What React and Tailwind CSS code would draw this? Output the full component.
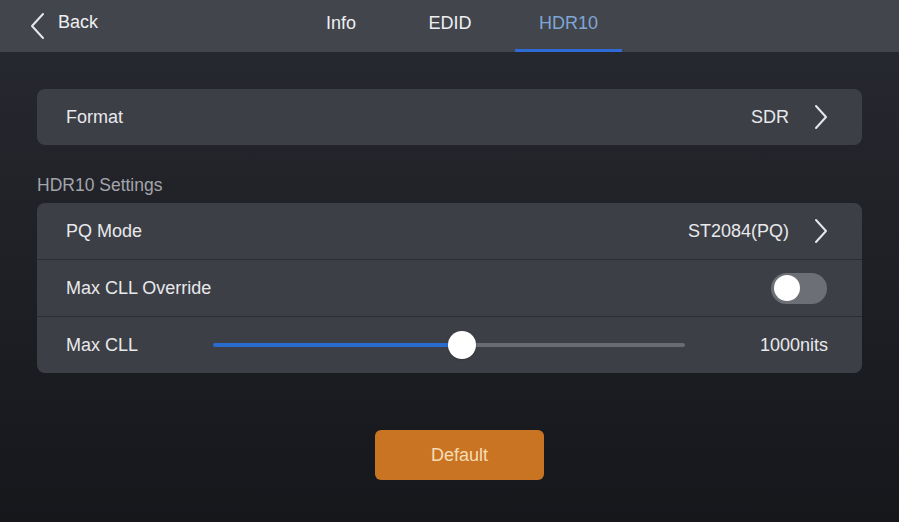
import React from "react";

function Chevron({ className = "" }) {
  return (
    <svg width="14" height="26" viewBox="0 0 14 26" className={className} fill="none">
      <path d="M2 2 L12 13 L2 24" stroke="#e6e7ea" strokeWidth="2" strokeLinecap="round" strokeLinejoin="round" />
    </svg>
  );
}

export default function App() {
  return (
    <div
      className="w-[899px] h-[522px] overflow-hidden flex flex-col bg-gradient-to-b from-[#282a31] to-[#16171b] text-[#e8e9ec]"
      style={{ fontFamily: '"Liberation Sans", Arial, sans-serif' }}
    >
      {/* Header */}
      <div className="h-[52px] bg-[#43454d] flex items-stretch relative shrink-0">
        <div className="flex items-center pl-[29px] gap-[13px]">
          <svg width="16" height="28" viewBox="0 0 16 28" fill="none">
            <path d="M14 2 L3 14 L14 26" stroke="#e6e7ea" strokeWidth="2" strokeLinecap="round" strokeLinejoin="round" />
          </svg>
          <span className="text-[18px] text-[#eeeff1] -mt-[7px]">Back</span>
        </div>
        <div className="absolute left-[287px] top-0 h-[52px] flex">
          <div className="w-[108px] flex justify-center pt-[10px] text-[18px] text-[#eeeff1]">Info</div>
          <div className="w-[110px] flex justify-center pt-[10px] text-[18px] text-[#eeeff1]">EDID</div>
          <div className="ml-[10px] w-[107px] flex flex-col items-center justify-between pt-[10px] text-[18px] text-[#7ea6d6]">
            <span>HDR10</span>
            <div className="w-full h-[3px] bg-[#2f6ad6]" />
          </div>
        </div>
      </div>

      <div className="px-[37px] pt-[37px] flex flex-col">
        {/* Format */}
        <div className="h-[56px] rounded-[8px] bg-[#3d3f46] flex items-center pl-[29px] pr-[34px]">
          <span className="text-[18px] flex-1">Format</span>
          <span className="text-[18px] mr-[25px]">SDR</span>
          <Chevron />
        </div>

        <div className="mt-[30px] mb-[8px] text-[17.5px] text-[#a3a5ab] leading-[20px]">HDR10 Settings</div>

        <div className="rounded-[8px] bg-[#3d3f46] flex flex-col overflow-hidden">
          <div className="h-[57px] flex items-center pl-[29px] pr-[34px] border-b-[1.5px] border-[#2c2e34]">
            <span className="text-[18px] flex-1">PQ Mode</span>
            <span className="text-[18px] mr-[25px]">ST2084(PQ)</span>
            <Chevron />
          </div>
          <div className="h-[57px] flex items-center pl-[29px] pr-[35px] border-b-[1.5px] border-[#2c2e34]">
            <span className="text-[18px] flex-1">Max CLL Override</span>
            <div className="w-[56px] h-[31px] rounded-full bg-[#6d6f76] flex items-center pl-[3px]">
              <div className="w-[26px] h-[26px] rounded-full bg-white" />
            </div>
          </div>
          <div className="h-[56px] flex items-center pl-[29px] pr-[34px]">
            <span className="text-[18px] w-[147px]">Max CLL</span>
            <div className="w-[472px] h-[28px] relative flex items-center">
              <div className="h-[4px] w-[249px] bg-[#2a6bd0] rounded-l-full" />
              <div className="h-[4px] flex-1 bg-[#6a6c72] rounded-r-full" />
              <div className="absolute left-[235px] top-0 w-[28px] h-[28px] rounded-full bg-white shadow" />
            </div>
            <span className="text-[18px] ml-auto">1000nits</span>
          </div>
        </div>

        <div className="flex justify-center mt-[57px]">
          <div className="ml-[20px] w-[169px] h-[50px] rounded-[6px] bg-[#c97422] flex items-center justify-center text-[18px] text-[#f6dcb6]">
            Default
          </div>
        </div>
      </div>
    </div>
  );
}
